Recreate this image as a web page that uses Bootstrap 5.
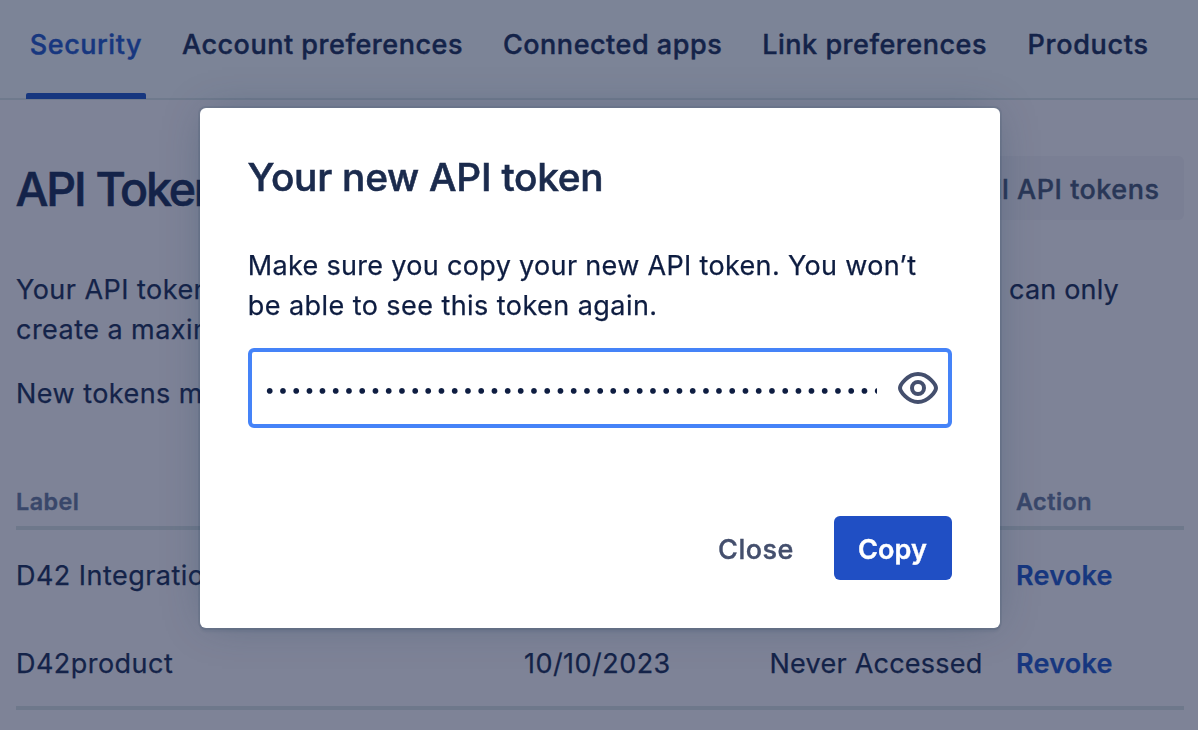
<!DOCTYPE html>
<html lang="en">
<head>
<meta charset="utf-8">
<meta name="viewport" content="width=device-width, initial-scale=1">
<title>API tokens</title>
<link href="https://cdn.jsdelivr.net/npm/bootstrap@5.3.0/dist/css/bootstrap.min.css" rel="stylesheet">
<style>
  body { font-family: Inter, "Liberation Sans", sans-serif; font-size: 27px; line-height: 40px; letter-spacing: .46px; color: #142349; background: #7e8397; height: 730px; overflow: hidden; -webkit-text-stroke: .25px currentColor; }
  .tabs-bar { height: 100px; background: #7c8497; border-bottom: 2px solid #6f7a8d; padding: 24px 0 0 25.5px; gap: 32px; white-space: nowrap; }
  .tabs-bar .nav-link { position: relative; padding: 1px 3.7px 0 4.3px; height: 75px; color: #142349; font-weight: 500; letter-spacing: .52px; -webkit-text-stroke-width: .4px; }
  .tabs-bar .nav-link:last-child { letter-spacing: .72px; margin-left: .5px; }
  .tabs-bar .nav-link.active { color: #17377f; }
  .tabs-bar .nav-link.active::after { content: ""; position: absolute; left: .5px; width: 120px; bottom: 0; height: 6px; border-radius: 2px 2px 0 0; background: #17377f; }
  .page { padding: 56px 14px 0 16px; white-space: nowrap; }
  .page h1 { font-size: 46.5px; font-weight: 500; letter-spacing: -2.2px; line-height: 64px; margin: 0 0 0 -.5px; padding-top: 1px; -webkit-text-stroke-width: .6px; word-spacing: 1px; }
  .btn-subtle { font-size: 27px; line-height: 40px; font-weight: 500; letter-spacing: .5px; color: #293757; background: #7a7f94; border: 0; border-radius: 6px; padding: 14px 24.5px 10px 24px; height: 64px; -webkit-text-stroke: .4px currentColor; }
  .intro { margin-top: 49px; margin-bottom: 24px; }
  .intro-line { width: 1103px; }
  .can-only { letter-spacing: .2px; }
  .tokens { display: grid; grid-template-columns: 508px 245.5px 246.5px 168px; margin-top: 67px; }
  .tokens > div { height: 88px; line-height: 88px; padding-top: 2px; }
  .tokens > .th-cell { font-size: 23.3px; font-weight: 600; letter-spacing: .5px; color: #39476a; height: 49px; line-height: 40px; padding-top: 1px; border-bottom: 4px solid #6e788b; -webkit-text-stroke-width: .4px; }
  .tokens > .last-cell { height: 92px; border-bottom: 4px solid #6e788b; }
  .tokens .accessed { letter-spacing: .24px; }
  .revoke { color: #17377f; font-weight: 600; letter-spacing: .22px; text-decoration: none; }
  .token-modal { background: transparent; }
  .token-modal .modal-dialog { width: 800px; max-width: 800px; margin: 108px 0 0 200px; }
  .token-modal .modal-content { height: 520px; border: 0; border-radius: 6px; padding: 47px 48px 48px; color: #0e1d41; box-shadow: 0 0 0 2px rgba(20,50,80,.09), 0 4px 2px rgba(20,50,80,.08), 0 0 40px -8px rgba(30,60,90,.34); }
  .token-modal .modal-title { font-size: 38.8px; line-height: 44px; font-weight: 500; letter-spacing: -.24px; color: #1b2b4d; margin-left: -.5px; -webkit-text-stroke-width: .6px; }
  .token-modal p { margin: 47px -20px 22px -.3px; letter-spacing: .33px; }
  .token-modal p .second { letter-spacing: .44px; }
  .secret { height: 80px; border: 4px solid #4583f8; border-radius: 6px; padding: 0 10px 0 12px; }
  .secret .dots { width: 613px; overflow: hidden; white-space: nowrap; font-size: 18.5px; letter-spacing: 2.81px; line-height: 40px; padding: 1px 0 0 .5px; -webkit-text-stroke-width: 0; }
  .modal-buttons { margin-top: 88px; gap: 16px; }
  .modal-buttons .btn { font-size: 27px; line-height: 40px; height: 64px; padding: 14px 0 10px; border: 0; border-radius: 6px; -webkit-text-stroke: .4px currentColor; }
  .btn-dismiss { width: 124px; color: #444f6d; font-weight: 500; letter-spacing: .5px; }
  .modal-buttons .btn-copy, .modal-buttons .btn-copy:hover { width: 118px; color: #fff; background: #204fc4; font-weight: 600; letter-spacing: .11px; padding-right: 1px; }
</style>
</head>
<body>
<nav class="nav tabs-bar flex-nowrap">
  <a class="nav-link active" href="#">Security</a>
  <a class="nav-link" href="#">Account preferences</a>
  <a class="nav-link" href="#">Connected apps</a>
  <a class="nav-link" href="#">Link preferences</a>
  <a class="nav-link" href="#">Products</a>
</nav>

<main class="page">
  <div class="d-flex justify-content-between align-items-start">
    <h1>API Tokens</h1>
    <button class="btn btn-subtle" type="button">Revoke all API tokens</button>
  </div>
  <div class="intro">
    <div class="intro-line d-flex justify-content-between"><span>Your API tokens need to be treated as securely as a password. You</span><span class="can-only">can only</span></div>
    <div>create a maximum of 25 tokens at a time.</div>
  </div>
  <div>New tokens may take up to a minute to work.</div>

  <div class="tokens">
    <div class="th-cell">Label</div><div class="th-cell">Created</div><div class="th-cell">Last accessed</div><div class="th-cell">Action</div>
    <div>D42 Integration</div><div>10/10/2023</div><div class="accessed">Never Accessed</div><div><a class="revoke" href="#">Revoke</a></div>
    <div class="last-cell">D42product</div><div class="last-cell">10/10/2023</div><div class="last-cell accessed">Never Accessed</div><div class="last-cell"><a class="revoke" href="#">Revoke</a></div>
  </div>
</main>

<div class="modal token-modal d-block overflow-hidden" tabindex="-1" role="dialog">
  <div class="modal-dialog">
    <div class="modal-content">
      <h2 class="modal-title">Your new API token</h2>
      <p>Make sure you copy your new API token. You won’t<br><span class="second">be able to see this token again.</span></p>
      <div class="secret d-flex align-items-center justify-content-between">
        <div class="dots">•••••••••••••••••••••••••••••••••••••••••••••••</div>
        <svg width="40" height="32" viewBox="0 0 40 32" fill="none" stroke="#444f6d" stroke-width="4" aria-label="Show token">
          <path d="M2 16C2 13 9.5 2 20 2S38 13 38 16S30.5 30 20 30S2 19 2 16Z"/>
          <circle cx="20" cy="16" r="6"/>
        </svg>
      </div>
      <div class="modal-buttons d-flex justify-content-end">
        <button class="btn btn-dismiss" type="button">Close</button>
        <button class="btn btn-copy" type="button">Copy</button>
      </div>
    </div>
  </div>
</div>
<script src="https://cdn.jsdelivr.net/npm/bootstrap@5.3.0/dist/js/bootstrap.bundle.min.js"></script>
</body>
</html>
